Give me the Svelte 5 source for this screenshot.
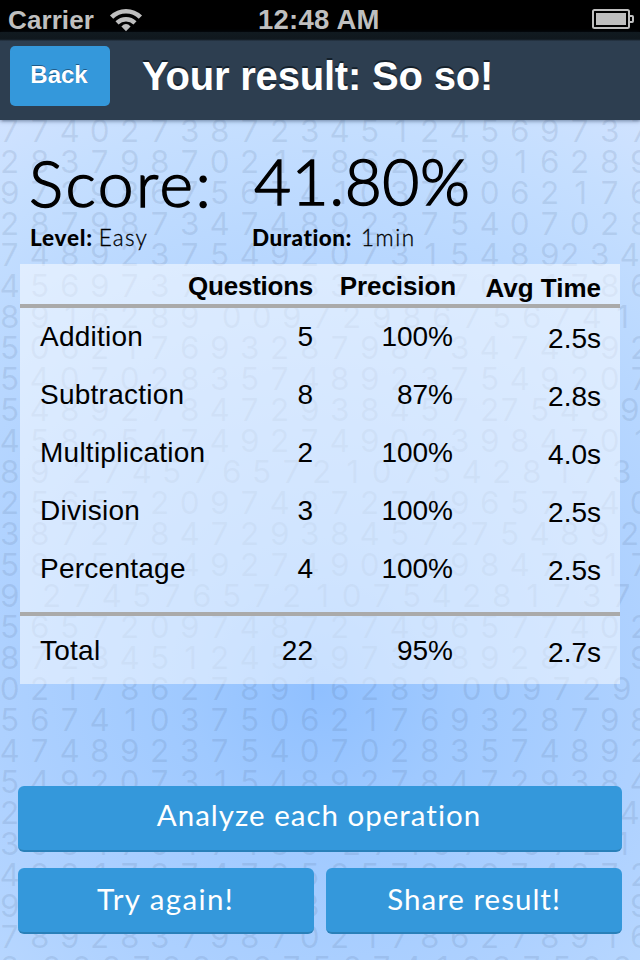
<script>
  const digitRows = [
    '7 7 4 0 2 7 3 8 7 2 3 4 5 1 2 4 5 6 9 7 3 7',
    '2 8 3 7 9 8 7 0 2 1 7 8 6 2 7 8 9 1 6 2 8 9',
    '9 7 2 9 8 6 7 5 6 7 4 1 0 3 7 5 0 6 2 1 7 6',
    '2 8 7 9 8 7 3 4 7 4 8 9 2 3 7 5 4 0 7 0 2 8',
    '7 4 8 9 2 3 7 5 4 9 2 0 7 3 1 5 4 8 92 3 4',
    '4 5 6 9 7 3 7 8 9 2 8 3 7 9 8 7 0 2 1 7 8 6',
    '8 9 1 6 2 8 9  0 0 9 7 2 9 8 6 7 5 6 7 4 1',
    '5 0 6 2 1 7 6 9 3 2 8 7 9 8 7 3 4 7 4 8 9 2',
    '5 4 0 7 0 2 8 3 5 7 4 8 9 2 3 7 5 4 9 2 0 7',
    '5 4 8 9 2 7 8 4 7 2 9 3 8 4 5 7 27 5 4 8 9',
    '4 5 8 2 5 4 7 4 9 2 7 4 9 0 2 3 9 8 4 7 0 1',
    '8 9  2 7 4 5 7 6 5 7 2 1 0 7 5 4 2 8 1 7 3',
    '2 5 6 5 7 2 0 9 7 4 8 7 2 7 4 9 6 5 7 7 4 0',
    '3 8 7 2 7 8 4 7 2 9 3 8 4 5 7 27 5 4 8 9 2',
    '5 8 2 5 4 7 4 9 2 7 4 9 0 2 3 9 8 4 7 0 1 7',
    '9  2 7 4 5 7 6 5 7 2 1 0 7 5 4 2 8 1 7 3 7',
    '5 6 5 7 2 0 9 7 4 8 7 2 7 4 9 6 5 7 7 4 0 2',
    '8 7 2 3 4 5 1 2 4 5 6 9 7 3 7 8 9 2 8 3 7 9',
    '0 2 1 7 8 6 2 7 8 9 1 6 2 8 9  0 0 9 7 2 9',
    '5 6 7 4 1 0 3 7 5 0 6 2 1 7 6 9 3 2 8 7 9 8',
    '4 7 4 8 9 2 3 7 5 4 0 7 0 2 8 3 5 7 4 8 9 2',
    '5 4 9 2 0 7 3 1 5 4 8 9 2 7 8 4 7 2 9 3 8 4',
    '2 7 2 9 3 8 4 5 7 27 5 4 8 9 2 7 5 8 2 5 4 9',
    '3 9 8 4 7 0 1 7 4 8 9  2 7 4 5 7 6 5 7 2 1',
    '4 2 8 1 7 3 7 4 7 2 5 2 5 7 2 0 9 7 4 8 7 2',
    '9 6 5 7 7 4 0 2 7 3 3 7 2 3 4 5 1 2 4 5 6 9',
    '7 8 9 2 8 3 7 9 8 7 0 2 1 7 8 6 2 7 8 9 1 6',
    '8  0 0 9 7 2 9 8 6 7 5 6 7 4 1 0 3 7 5 0 6'
  ];

  // A digit takes 20px, a single space 10px.
  function place(row) {
    let x = 9.7;
    const out = [];
    let prev = '';
    for (const ch of row) {
      if (ch === ' ') x += prev === ' ' ? 12 : 10;
      else {
        out.push({ ch, x: ch === '1' ? x + 1 : x });
        x += 20;
      }
      prev = ch;
    }
    return out;
  }

  const rows = [
    ['Addition', '5', '100%', '2.5s'],
    ['Subtraction', '8', '87%', '2.8s'],
    ['Multiplication', '2', '100%', '4.0s'],
    ['Division', '3', '100%', '2.5s'],
    ['Percentage', '4', '100%', '2.5s']
  ];
  const total = ['Total', '22', '95%', '2.7s'];
</script>

{#snippet line(cells, kind)}
  <div class="row {kind}">
    <span class="name">{cells[0]}</span>
    <span class="q">{cells[1]}</span>
    <span class="p">{cells[2]}</span>
    <span class="t">{cells[3]}</span>
  </div>
{/snippet}

<div class="screen">
  <svg class="digits" width="640" height="960" aria-hidden="true">
    {#each digitRows as row, i}
      <text y={142 + i * 31} text-anchor="middle">
        {#each place(row) as d}<tspan x={d.x}>{d.ch}</tspan>{/each}
      </text>
    {/each}
  </svg>

  <div class="status">
    <span class="carrier">Carrier</span>
    <svg class="wifi" width="34" height="26" viewBox="0 0 34 26">
      <path d="M2.6 11.2A20.4 20.4 0 0 1 31.4 11.2" fill="none" stroke="#bfbfbf" stroke-width="4.6" />
      <path d="M8 16.8A13 13 0 0 1 26 16.8" fill="none" stroke="#bfbfbf" stroke-width="4.4" />
      <path d="M17 25.2L12.4 20.4Q17 15.6 21.6 20.4Z" fill="#bfbfbf" />
    </svg>
    <span class="clock">12:48 AM</span>
    <svg class="battery" width="42" height="21" viewBox="0 0 42 21">
      <rect x="1" y="1" width="36" height="18" rx="1.5" fill="none" stroke="#bfbfbf" stroke-width="2" />
      <rect x="4" y="4" width="30" height="12" fill="#bfbfbf" />
      <path d="M38 7H40.2Q41 7 41 8V12Q41 13 40.2 13H38" fill="none" stroke="#bfbfbf" stroke-width="2" />
    </svg>
  </div>

  <header>
    <button class="back">Back</button>
    <h1>Your result: So so!</h1>
  </header>

  <section class="summary">
    <div class="col left">
      <div class="big score">Score:</div>
      <div class="meta"><b>Level:</b><span class="easy">Easy</span></div>
    </div>
    <div class="col">
      <div class="big pct">41.80%</div>
      <div class="meta"><b class="dur">Duration:</b><span class="min">1min</span></div>
    </div>
  </section>

  <section class="table">
    {@render line(['', 'Questions', 'Precision', 'Avg Time'], 'head')}
    <div class="body">
      {#each rows as r}{@render line(r, '')}{/each}
    </div>
    {@render line(total, 'total')}
  </section>

  <footer>
    <button class="wide">Analyze each operation</button>
    <div class="pair">
      <button class="try">Try again!</button>
      <button class="share">Share result!</button>
    </div>
  </footer>
</div>

<style>
  :global(body) { margin: 0; }
  .screen {
    position: relative;
    width: 640px;
    height: 960px;
    overflow: hidden;
    display: flex;
    flex-direction: column;
    color: #000;
    font-family: 'Liberation Sans', Arial, sans-serif;
    background: radial-gradient(circle at 320px 690px, #90c0ff 0, #9fc9ff 130px, #aed1ff 320px, #bbd9ff 470px, #c6dfff 580px, #d2e3ff 670px);
  }
  .digits { position: absolute; left: 0; top: 0; }
  .digits text { font: 400 31.5px Inter, Roboto, sans-serif; fill: #40567c; fill-opacity: 0.125; }
  .status, header, .summary, .table, footer { position: relative; }
  .status {
    height: 32px;
    background: #000;
    color: #bfbfbf;
    font-weight: bold;
    display: flex;
    flex: none;
    box-sizing: border-box;
    padding: 0 6px 0 8px;
    line-height: 40px;
  }
  .carrier { font-size: 26px; width: 101px; letter-spacing: 0.1px; }
  .wifi { margin-top: 6px; }
  .clock { font-size: 27.5px; margin-left: 115px; flex: 1; white-space: nowrap; letter-spacing: 0.25px; }
  .battery { margin-top: 9px; }
  header {
    flex: none;
    height: 88px;
    box-sizing: border-box;
    padding: 14px 10px 0;
    display: flex;
    background: linear-gradient(#111a20 0, #10181e 7px, #1a2530 8px, #2d3e50 9px);
    box-shadow: 0 1px 4px rgba(30, 50, 80, 0.55);
    color: #fff;
  }
  button {
    border: 0;
    padding: 0;
    margin: 0;
    color: #fff;
    background: #3498db;
    border-radius: 6px;
    display: block;
  }
  .back {
    width: 100px;
    height: 60px;
    padding: 0 2px 3px 0;
    box-sizing: border-box;
    border-radius: 5px;
    font: bold 24px 'Liberation Sans', Arial, sans-serif;
    text-shadow: 0 -1.5px 0 rgba(20, 50, 80, 0.6);
  }
  h1 {
    margin: 0 0 0 32px;
    font-size: 40px;
    line-height: 60px;
    font-weight: bold;
    letter-spacing: -0.2px;
    white-space: nowrap;
    text-shadow: 0 -2px 0 rgba(15, 25, 35, 0.8);
  }
  .summary {
    height: 144px;
    flex: none;
    display: flex;
    padding-left: 30px;
    font-family: Lato, 'Open Sans', sans-serif;
    font-variant-ligatures: none;
    white-space: nowrap;
  }
  .left { width: 222px; }
  .big { font-weight: 300; font-size: 64px; line-height: 80px; height: 84px; margin-top: 21px; -webkit-text-stroke: 1.5px #000; }
  .score { letter-spacing: 2.6px; padding-top: 2px; height: 82px; margin-left: -1px; }
  .pct { letter-spacing: 0.5px; margin-left: 2px; }
  .meta { font-size: 22.5px; line-height: 25px; font-weight: 300; -webkit-text-stroke: 0.3px #000; }
  .meta b { font-weight: 900; letter-spacing: 0.75px; -webkit-text-stroke: 0; }
  .easy { margin-left: 6px; letter-spacing: 1.2px; }
  .meta .dur { letter-spacing: 0.5px; }
  .min { margin-left: 9px; letter-spacing: 1.6px; }
  .table {
    flex: none;
    height: 420px;
    margin: 0 20px;
    background: rgba(255, 255, 255, 0.51);
  }
  .row { display: flex; font-size: 28px; line-height: 58px; height: 58px; white-space: nowrap; }
  .name { width: 170px; padding-left: 20px; letter-spacing: 0.25px; }
  .q { width: 103px; text-align: right; }
  .p { width: 140px; text-align: right; }
  .t { width: 148px; text-align: right; position: relative; top: 2px; }
  .head {
    height: 44px;
    box-sizing: border-box;
    border-bottom: 4px solid #aaa;
    font-size: 26px;
    font-weight: bold;
    line-height: 44px;
  }
  .head .name { width: 134px; }
  .head .q { width: 139px; letter-spacing: -0.25px; }
  .head .p { width: 143px; letter-spacing: -0.1px; }
  .head .t { width: 145px; }
  .body { height: 304px; border-bottom: 4px solid #aaa; }
  .total { height: 68px; line-height: 70px; }
  footer { padding: 102px 18px 0; }
  footer button {
    height: 66px;
    width: 100%;
    box-sizing: border-box;
    border-bottom: 2px solid #2980b9;
    padding-bottom: 4px;
    font: 400 29.5px Lato, 'Open Sans', sans-serif;
    letter-spacing: 1px;
  }
  footer .wide { padding-bottom: 7px; padding-right: 2px; }
  footer .try { letter-spacing: 1.4px; padding-right: 1px; }
  .pair { display: flex; gap: 12px; margin-top: 16px; }
</style>
